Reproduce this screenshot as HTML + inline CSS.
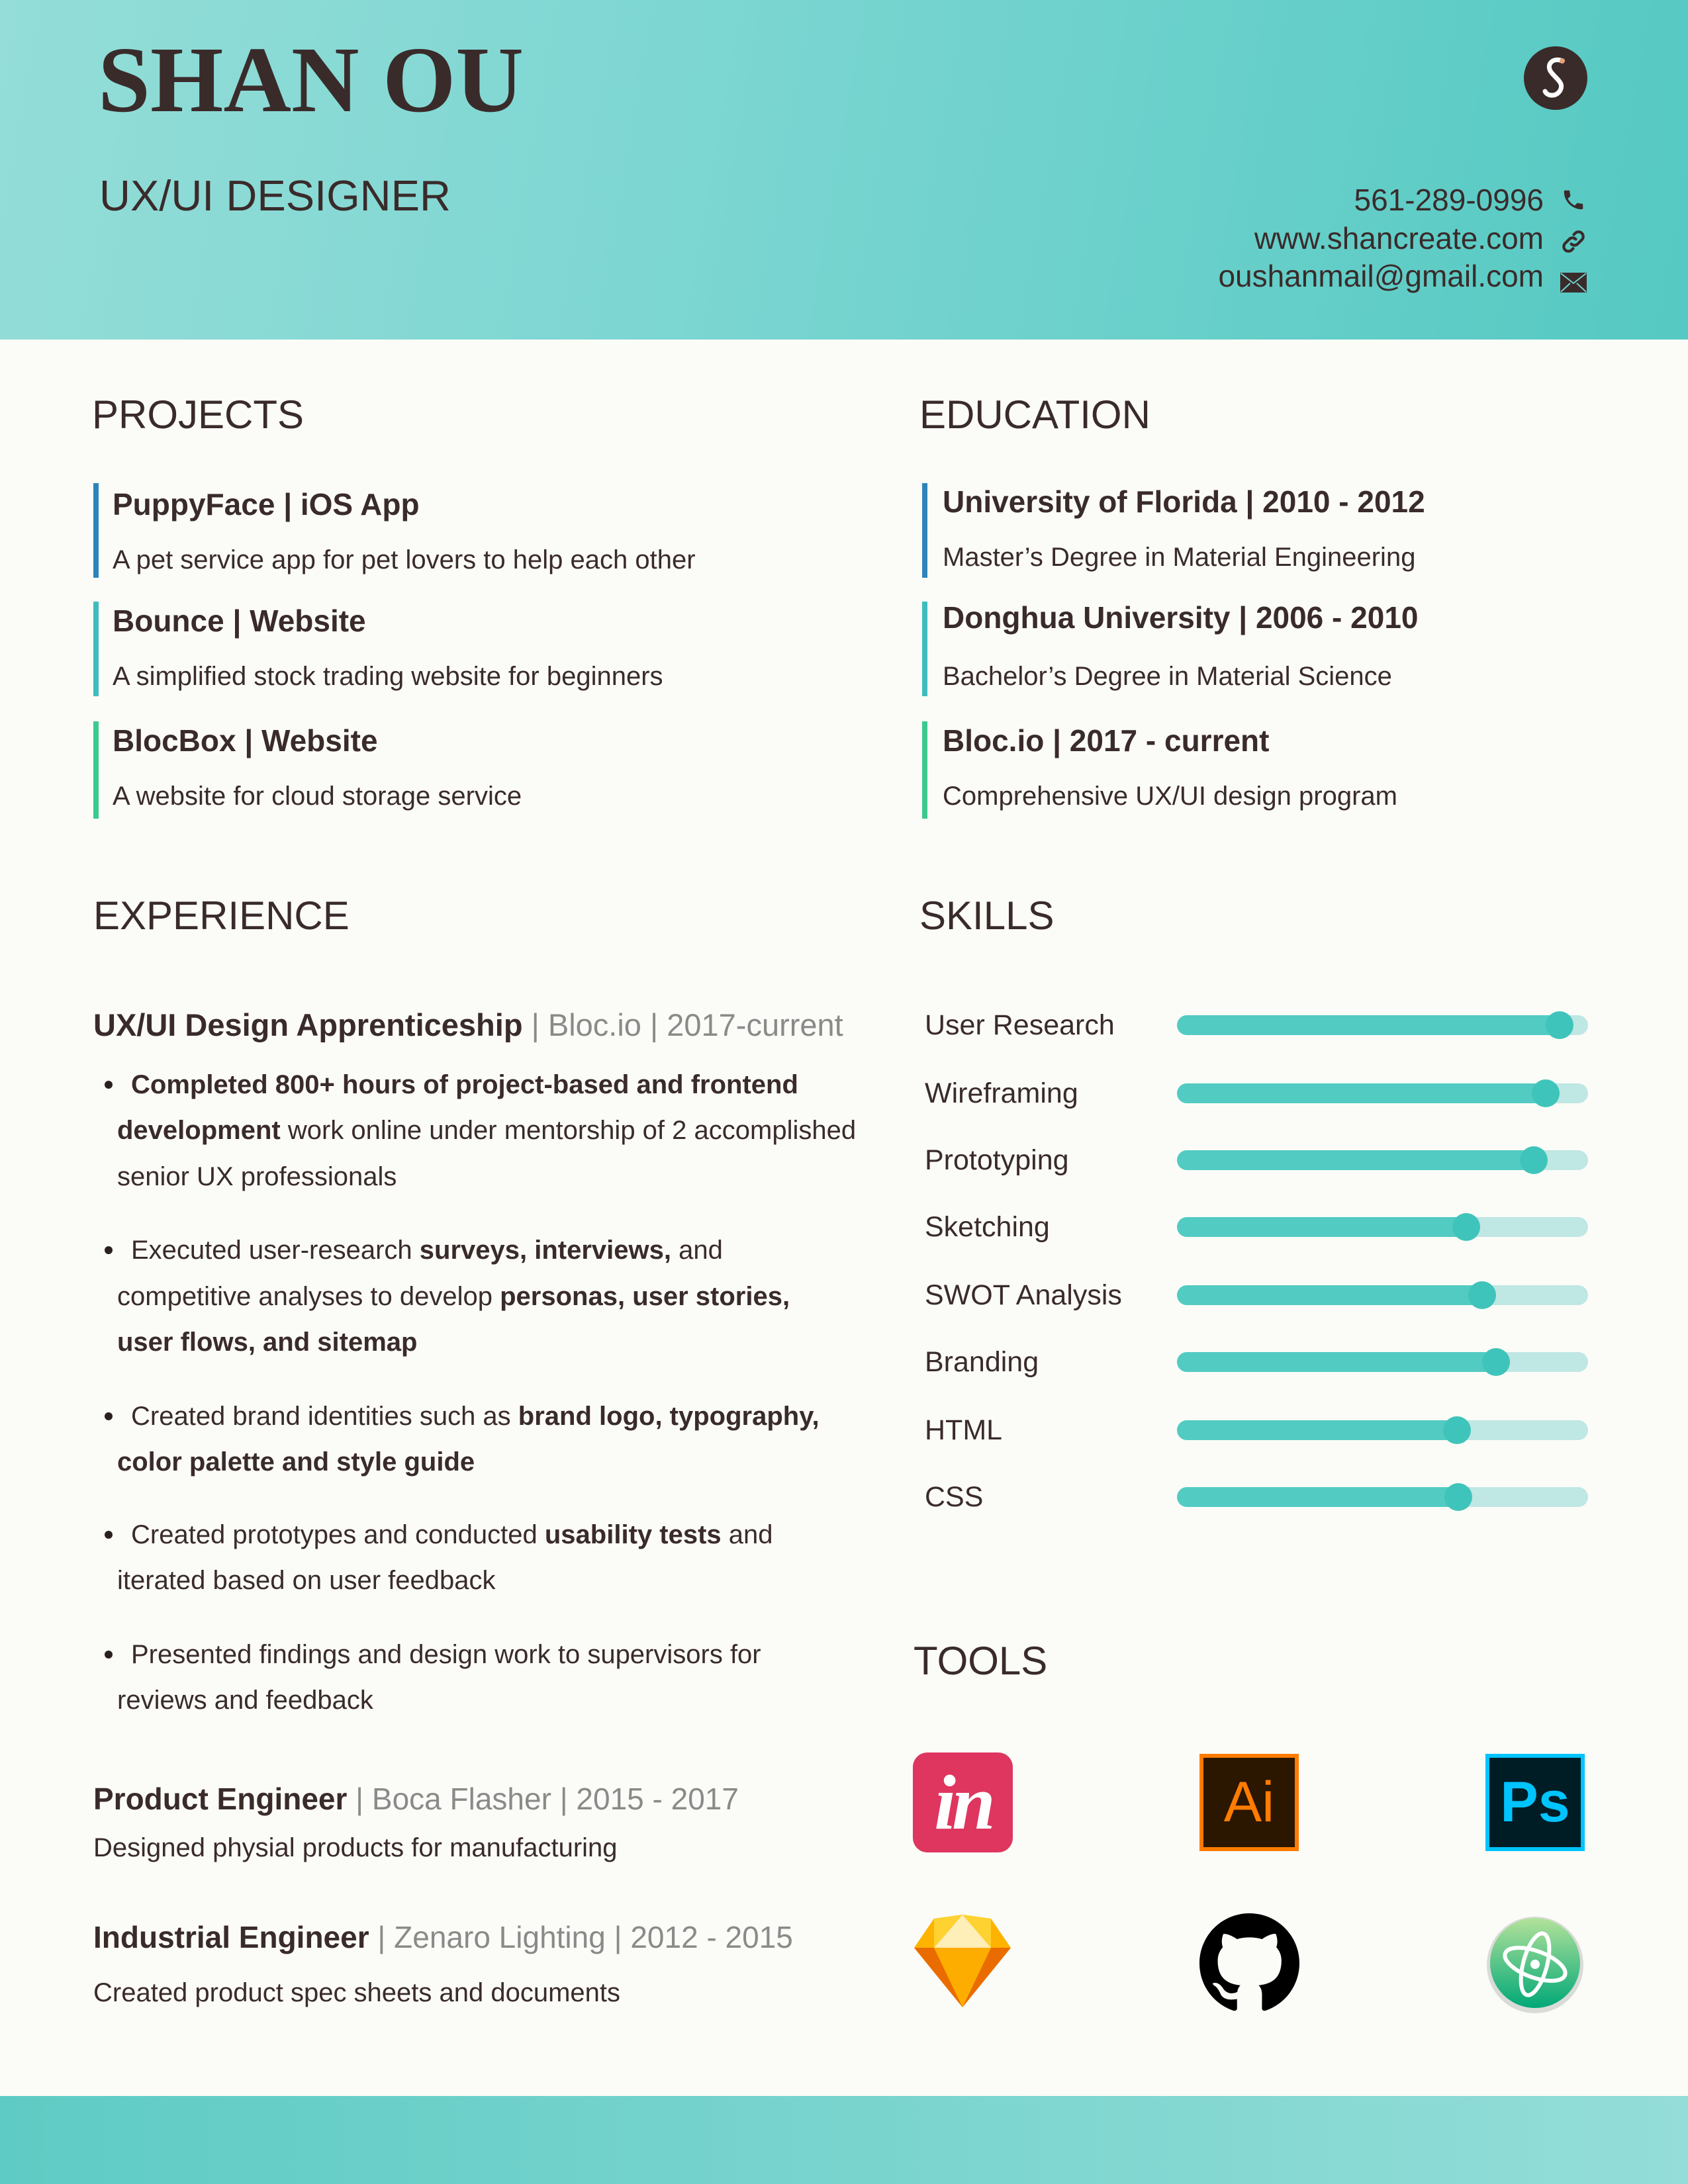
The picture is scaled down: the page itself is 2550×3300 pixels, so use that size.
<!DOCTYPE html>
<html><head><meta charset="utf-8">
<style>
*{margin:0;padding:0;box-sizing:border-box}
body{width:2550px;height:3300px;position:relative;background:#fbfcf7;font-family:"Liberation Sans",sans-serif;color:#3a2b2b;overflow:hidden}
.a{position:absolute;white-space:nowrap}
.hdr{position:absolute;left:0;top:0;width:2550px;height:513px;background:linear-gradient(100deg,#94ddd8 0%,#7dd6d2 40%,#55c9c2 100%)}
.ftr{position:absolute;left:0;top:3167px;width:2550px;height:133px;background:linear-gradient(90deg,#5ecbc4,#94ddd8)}
.h{font-size:60px;line-height:80px;color:#3a2b2b}
.t{font-size:46px;font-weight:bold;line-height:60px}
.d{font-size:40px;line-height:60px}
.bar{position:absolute;width:8px}
.b{font-size:40px;line-height:70px}
.g{color:#8a8a8a;font-weight:normal}
.sk{font-size:43px;line-height:60px}
.trk{position:absolute;left:1778px;width:621px;height:30px;border-radius:15px;background:#bfe7e4}
.fill{position:absolute;left:0;top:0;height:30px;border-radius:15px;background:#52cbc3}
.knob{position:absolute;top:-6px;width:42px;height:42px;border-radius:50%;background:#3fc4bb;margin-left:-21px}
.dot{position:absolute;width:12px;height:12px;border-radius:50%;background:#2b2020}
</style></head><body>
<div class="hdr"></div>
<div class="ftr"></div>

<div class="a" style="left:148px;top:40px;font-family:'Liberation Serif',serif;font-weight:bold;font-size:142px;line-height:160px;color:#3a2b2b">SHAN OU</div>
<div class="a" style="left:150px;top:256px;font-size:65px;line-height:80px">UX/UI DESIGNER</div>

<svg class="a" style="left:2302px;top:70px" width="96" height="96" viewBox="0 0 96 96"><circle cx="48" cy="48" r="48" fill="#3a2b2b"/><path d="M58 22c-14-6-26 6-16 18 8 10 20 16 12 28-6 8-18 8-22 0" fill="none" stroke="#fff" stroke-width="7" stroke-linecap="round"/><circle cx="58" cy="22" r="4" fill="#e7a27a"/></svg>

<div class="a" style="right:218px;top:272px;font-size:46px;line-height:60px;text-align:right">561-289-0996</div>
<div class="a" style="right:218px;top:330px;font-size:46px;line-height:60px;text-align:right">www.shancreate.com</div>
<div class="a" style="right:218px;top:387px;font-size:46px;line-height:60px;text-align:right">oushanmail@gmail.com</div>
<svg class="a" style="left:2358px;top:282px" width="38" height="40" viewBox="0 0 24 24"><path d="M6.6 10.8c1.4 2.8 3.8 5.1 6.6 6.6l2.2-2.2c.3-.3.7-.4 1-.2 1.1.4 2.3.6 3.6.6.6 0 1 .4 1 1V20c0 .6-.4 1-1 1C10.6 21 3 13.4 3 4c0-.6.4-1 1-1h3.5c.6 0 1 .4 1 1 0 1.3.2 2.5.6 3.6.1.3 0 .7-.2 1z" fill="#3a2b2b"/></svg>
<svg class="a" style="left:2356px;top:344px" width="42" height="42" viewBox="0 0 24 24"><path d="M10 14a4 4 0 0 0 5.7 0l3.5-3.5a4 4 0 0 0-5.7-5.7l-1.2 1.2M14 10a4 4 0 0 0-5.7 0l-3.5 3.5a4 4 0 0 0 5.7 5.7l1.2-1.2" fill="none" stroke="#3a2b2b" stroke-width="2.4" stroke-linecap="round"/></svg>
<svg class="a" style="left:2357px;top:412px" width="40" height="30" viewBox="0 0 40 30"><rect x="0" y="0" width="40" height="30" fill="#3a2b2b"/><path d="M1 1l19 15L39 1M1 29l14-13M39 29L25 16" fill="none" stroke="#6fd2cb" stroke-width="2"/></svg>

<div class="a h" style="left:139px;top:587px">PROJECTS</div>
<div class="bar" style="left:141px;top:730px;height:143px;background:#2f83bb"></div>
<div class="a t" style="left:170px;top:732px">PuppyFace | iOS App</div>
<div class="a d" style="left:170px;top:816px">A pet service app for pet lovers to help each other</div>
<div class="bar" style="left:141px;top:909px;height:143px;background:#3fbcc0"></div>
<div class="a t" style="left:170px;top:908px">Bounce | Website</div>
<div class="a d" style="left:170px;top:992px">A simplified stock trading website for beginners</div>
<div class="bar" style="left:141px;top:1090px;height:147px;background:#3cc98e"></div>
<div class="a t" style="left:170px;top:1089px">BlocBox | Website</div>
<div class="a d" style="left:170px;top:1173px">A website for cloud storage service</div>

<div class="a h" style="left:1389px;top:587px">EDUCATION</div>
<div class="bar" style="left:1393px;top:730px;height:143px;background:#2f83bb"></div>
<div class="a t" style="left:1424px;top:728px">University of Florida | 2010 - 2012</div>
<div class="a d" style="left:1424px;top:812px">Master’s Degree in Material Engineering</div>
<div class="bar" style="left:1393px;top:909px;height:143px;background:#3fbcc0"></div>
<div class="a t" style="left:1424px;top:903px">Donghua University | 2006 - 2010</div>
<div class="a d" style="left:1424px;top:992px">Bachelor’s Degree in Material Science</div>
<div class="bar" style="left:1393px;top:1090px;height:147px;background:#3cc98e"></div>
<div class="a t" style="left:1424px;top:1089px">Bloc.io | 2017 - current</div>
<div class="a d" style="left:1424px;top:1173px">Comprehensive UX/UI design program</div>

<div class="a h" style="left:141px;top:1344px">EXPERIENCE</div>
<div class="a t" style="left:141px;top:1519px;font-size:47px">UX/UI Design Apprenticeship <span class="g">| Bloc.io | 2017-current</span></div>
<div class="dot" style="left:158px;top:1633px"></div>
<div class="a b" style="left:198px;top:1604px"><b>Completed 800+ hours of project-based and frontend</b></div>
<div class="a b" style="left:177px;top:1673px"><b>development</b> work online under mentorship of 2 accomplished</div>
<div class="a b" style="left:177px;top:1743px">senior UX professionals</div>
<div class="dot" style="left:158px;top:1883px"></div>
<div class="a b" style="left:198px;top:1854px">Executed user-research <b>surveys, interviews,</b> and</div>
<div class="a b" style="left:177px;top:1924px">competitive analyses to develop <b>personas, user stories,</b></div>
<div class="a b" style="left:177px;top:1993px"><b>user flows, and sitemap</b></div>
<div class="dot" style="left:158px;top:2134px"></div>
<div class="a b" style="left:198px;top:2105px">Created brand identities such as <b>brand logo, typography,</b></div>
<div class="a b" style="left:177px;top:2174px"><b>color palette and style guide</b></div>
<div class="dot" style="left:158px;top:2313px"></div>
<div class="a b" style="left:198px;top:2284px">Created prototypes and conducted <b>usability tests</b> and</div>
<div class="a b" style="left:177px;top:2353px">iterated based on user feedback</div>
<div class="dot" style="left:158px;top:2494px"></div>
<div class="a b" style="left:198px;top:2465px">Presented findings and design work to supervisors for</div>
<div class="a b" style="left:177px;top:2534px">reviews and feedback</div>
<div class="a t" style="left:141px;top:2688px">Product Engineer <span class="g">| Boca Flasher | 2015 - 2017</span></div>
<div class="a d" style="left:141px;top:2762px">Designed physial products for manufacturing</div>
<div class="a t" style="left:141px;top:2897px">Industrial Engineer <span class="g">| Zenaro Lighting | 2012 - 2015</span></div>
<div class="a d" style="left:141px;top:2981px">Created product spec sheets and documents</div>

<div class="a h" style="left:1389px;top:1344px">SKILLS</div>
<div class="a sk" style="left:1397px;top:1519px">User Research</div>
<div class="a sk" style="left:1397px;top:1622px">Wireframing</div>
<div class="a sk" style="left:1397px;top:1723px">Prototyping</div>
<div class="a sk" style="left:1397px;top:1824px">Sketching</div>
<div class="a sk" style="left:1397px;top:1927px">SWOT Analysis</div>
<div class="a sk" style="left:1397px;top:2028px">Branding</div>
<div class="a sk" style="left:1397px;top:2131px">HTML</div>
<div class="a sk" style="left:1397px;top:2232px">CSS</div>
<div class="trk" style="top:1534px"><div class="fill" style="width:578px"></div><div class="knob" style="left:578px"></div></div>
<div class="trk" style="top:1637px"><div class="fill" style="width:557px"></div><div class="knob" style="left:557px"></div></div>
<div class="trk" style="top:1738px"><div class="fill" style="width:539px"></div><div class="knob" style="left:539px"></div></div>
<div class="trk" style="top:1839px"><div class="fill" style="width:437px"></div><div class="knob" style="left:437px"></div></div>
<div class="trk" style="top:1942px"><div class="fill" style="width:461px"></div><div class="knob" style="left:461px"></div></div>
<div class="trk" style="top:2043px"><div class="fill" style="width:482px"></div><div class="knob" style="left:482px"></div></div>
<div class="trk" style="top:2146px"><div class="fill" style="width:423px"></div><div class="knob" style="left:423px"></div></div>
<div class="trk" style="top:2247px"><div class="fill" style="width:425px"></div><div class="knob" style="left:425px"></div></div>

<div class="a h" style="left:1380px;top:2470px">TOOLS</div>
<div class="a" style="left:1379px;top:2648px;width:151px;height:151px;border-radius:22px;background:#de365e;color:#fff;font-family:'Liberation Serif',serif;font-style:italic;font-weight:bold;font-size:118px;line-height:151px;text-align:center;letter-spacing:-6px">in</div>
<div class="a" style="left:1812px;top:2650px;width:150px;height:147px;background:#2b1600;border:6px solid #ff7c00;color:#ff7c00;font-size:86px;line-height:135px;text-align:center">Ai</div>
<div class="a" style="left:2244px;top:2650px;width:150px;height:147px;background:#001d26;border:6px solid #00c4ff;color:#00c4ff;font-weight:bold;font-size:86px;line-height:135px;text-align:center">Ps</div>
<svg class="a" style="left:1381px;top:2893px" width="146" height="148" viewBox="0 0 146 148"><polygon points="30,6 73,0 116,6 146,50 73,140 0,50" fill="#fdb300"/><polygon points="0,50 146,50 73,140" fill="#ea6c00"/><polygon points="30,50 116,50 73,140" fill="#fdad00"/><polygon points="73,0 30,50 116,50" fill="#feeeb7"/><polygon points="30,6 73,0 30,50" fill="#fdd231"/><polygon points="116,6 73,0 116,50" fill="#fdd231"/><polygon points="0,50 30,6 30,50" fill="#fdb300"/></svg>
<svg class="a" style="left:1812px;top:2891px" width="151" height="151" viewBox="0 0 16 16"><path fill="#000" d="M8 0C3.58 0 0 3.58 0 8c0 3.54 2.29 6.530 5.47 7.59.4.07.55-.17.55-.38 0-.19-.01-.82-.01-1.49-2.010.37-2.53-.49-2.69-.94-.09-.23-.48-.94-.82-1.130-.28-.15-.68-.52-.01-.53.63-.01 1.08.58 1.23.82.72 1.21 1.87.87 2.33.66.07-.52.28-.87.51-1.07-1.78-.2-3.64-.89-3.64-3.95 0-.87.31-1.59.82-2.15-.08-.2-.36-1.02.08-2.12 0 0 .67-.21 2.2.82.64-.18 1.32-.27 2-.27.68 0 1.36.09 2 .27 1.53-1.04 2.2-.82 2.2-.82.44 1.1.16 1.92.08 2.12.51.56.82 1.27.82 2.15 0 3.07-1.87 3.75-3.65 3.95.29.25.54.73.54 1.48 0 1.07-.01 1.93-.01 2.2 0 .21.15.46.55.38A8.013 8.013 0 0016 8c0-4.42-3.58-8-8-8z"/></svg>
<svg class="a" style="left:2244px;top:2893px" width="150" height="150" viewBox="0 0 150 150"><defs><linearGradient id="ag" x1="0" y1="0" x2="0" y2="1"><stop offset="0" stop-color="#b3e29a"/><stop offset="1" stop-color="#00a877"/></linearGradient></defs><circle cx="75" cy="76" r="73" fill="#d9dbd8"/><circle cx="75" cy="73" r="68" fill="url(#ag)"/><g fill="none" stroke="#fff" stroke-width="6"><ellipse cx="75" cy="75" rx="48" ry="20" transform="rotate(20 75 75)"/><ellipse cx="75" cy="75" rx="48" ry="18" transform="rotate(-75 75 75)"/></g><circle cx="75" cy="75" r="7" fill="#fff"/></svg>
</body></html>
